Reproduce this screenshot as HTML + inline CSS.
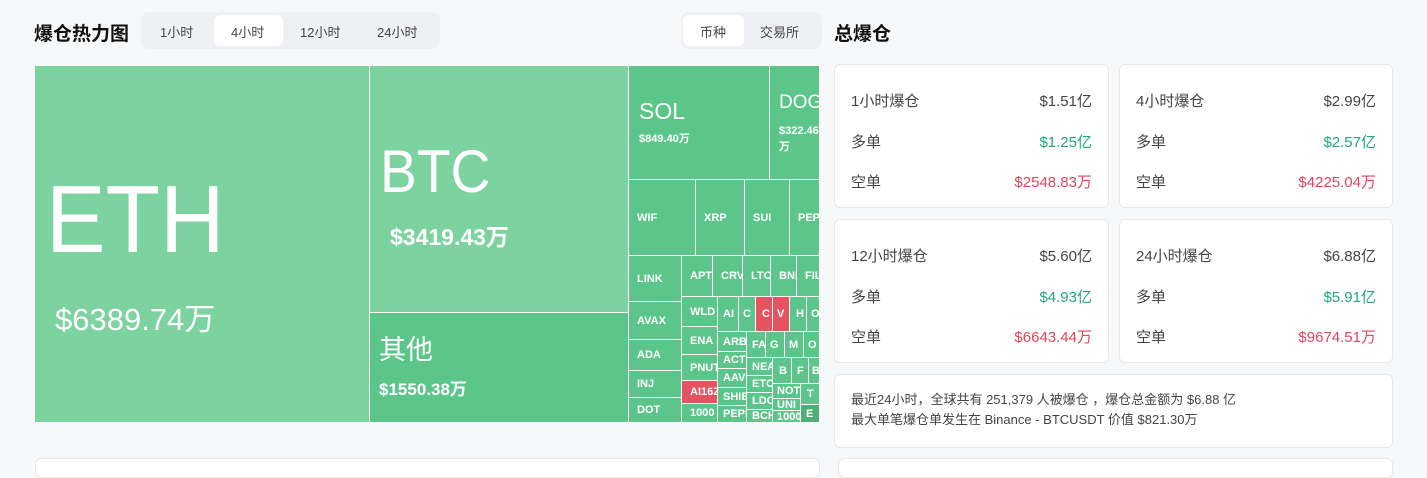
<!DOCTYPE html>
<html><head><meta charset="utf-8"><style>
*{margin:0;padding:0;box-sizing:border-box}
body{width:1427px;height:461px;background:#f7f8f9;font-family:"Liberation Sans","Noto Sans CJK SC",sans-serif;position:relative;overflow:hidden;color:#222}
.a{position:absolute}
.tm{position:absolute;left:35px;top:66px;width:785px;height:357px;background:#fff;overflow:hidden}
.c{position:absolute;background:#5cc68a;color:#fff;overflow:hidden;white-space:nowrap;font-weight:bold;font-size:11px;padding-left:8px;display:flex;align-items:center;border-right:1px solid #fff;border-bottom:1px solid #fff}
.r{background:#e4535f}
.card{position:absolute;background:#fff;border:1px solid #e6e8ea;border-radius:6px}
.row{position:absolute;left:16px;right:16px;display:flex;justify-content:space-between;font-size:15px;color:#444}
.g{color:#20a87a}.rd{color:#e0455a}
</style></head><body>
<div class="a" style="left:34px;top:19px;font-size:19px;font-weight:bold;color:#111">爆仓热力图</div>
<div class="a" style="left:141px;top:12px;width:299px;height:37px;background:#eef0f3;border-radius:8px"></div>
<div class="a" style="left:214px;top:15px;width:69px;height:31px;background:#fff;border-radius:6px"></div>
<div class="a" style="left:160px;top:22px;font-size:13px;color:#444">1小时</div>
<div class="a" style="left:231px;top:22px;font-size:13px;color:#444">4小时</div>
<div class="a" style="left:300px;top:22px;font-size:13px;color:#444">12小时</div>
<div class="a" style="left:377px;top:22px;font-size:13px;color:#444">24小时</div>
<div class="a" style="left:681px;top:12px;width:141px;height:37px;background:#eef0f3;border-radius:8px"></div>
<div class="a" style="left:683px;top:15px;width:61px;height:31px;background:#fff;border-radius:6px"></div>
<div class="a" style="left:700px;top:22px;font-size:13px;color:#444">币种</div>
<div class="a" style="left:760px;top:22px;font-size:13px;color:#444">交易所</div>
<div class="a" style="left:834px;top:19px;font-size:19px;font-weight:bold;color:#111">总爆仓</div>

<div class="tm">
<div class="c" style="left:0;top:0;width:335px;height:357px;background:#7dd3a0;display:block;padding:0;font-weight:normal">
 <div class="a" style="left:11px;top:106px;font-size:96px;line-height:1;transform:scaleX(.93);transform-origin:left">ETH</div>
 <div class="a" style="left:20px;top:238px;font-size:31px;line-height:1">$6389.74万</div></div>
<div class="c" style="left:335px;top:0;width:259px;height:247px;background:#7dd3a0;display:block;padding:0;font-weight:normal">
 <div class="a" style="left:10px;top:76px;font-size:60px;line-height:1;transform:scaleX(.92);transform-origin:left">BTC</div>
 <div class="a" style="left:20px;top:160px;font-size:23px;line-height:1;font-weight:bold">$3419.43万</div></div>
<div class="c" style="left:335px;top:247px;width:259px;height:110px;display:block;padding:0">
 <div class="a" style="left:9px;top:24px;font-size:27px;line-height:1;font-weight:normal">其他</div>
 <div class="a" style="left:9px;top:68px;font-size:17px;line-height:1">$1550.38万</div></div>
<div class="c" style="left:594px;top:0;width:141px;height:114px;display:block;padding:0">
 <div class="a" style="left:10px;top:34px;font-size:23px;line-height:1;font-weight:normal">SOL</div>
 <div class="a" style="left:10px;top:68px;font-size:11px;line-height:1">$849.40万</div></div>
<div class="c" style="left:735px;top:0;width:50px;height:114px;display:block;padding:0">
 <div class="a" style="left:9px;top:27px;font-size:19px;line-height:1;font-weight:normal">DOGE</div>
 <div class="a" style="left:9px;top:57px;font-size:11px;line-height:16px">$322.46<br>万</div></div>
<div class="c" style="left:594px;top:114px;width:67px;height:76px">WIF</div>
<div class="c" style="left:661px;top:114px;width:49px;height:76px">XRP</div>
<div class="c" style="left:710px;top:114px;width:45px;height:76px">SUI</div>
<div class="c" style="left:755px;top:114px;width:30px;height:76px">PEPE</div>
<div class="c" style="left:594px;top:190px;width:53px;height:46px">LINK</div>
<div class="c" style="left:594px;top:236px;width:53px;height:38px">AVAX</div>
<div class="c" style="left:594px;top:274px;width:53px;height:31px">ADA</div>
<div class="c" style="left:594px;top:305px;width:53px;height:27px">INJ</div>
<div class="c" style="left:594px;top:332px;width:53px;height:25px">DOT</div>
<div class="c" style="left:647px;top:190px;width:31px;height:41px">APT</div>
<div class="c" style="left:678px;top:190px;width:30px;height:41px">CRV</div>
<div class="c" style="left:708px;top:190px;width:28px;height:41px">LTC</div>
<div class="c" style="left:736px;top:190px;width:26px;height:41px">BNB</div>
<div class="c" style="left:762px;top:190px;width:23px;height:41px">FIL</div>
<div class="c" style="left:647px;top:231px;width:36px;height:30px">WLD</div>
<div class="c" style="left:647px;top:261px;width:36px;height:28px">ENA</div>
<div class="c" style="left:647px;top:289px;width:36px;height:26px">PNUT</div>
<div class="c r" style="left:647px;top:315px;width:36px;height:23px">AI16Z</div>
<div class="c" style="left:647px;top:338px;width:36px;height:19px">1000</div>
<div class="c" style="left:683px;top:231px;width:21px;height:35px;padding-left:5px">AI</div>
<div class="c" style="left:704px;top:231px;width:17px;height:35px;padding-left:4px">C</div>
<div class="c r" style="left:721px;top:231px;width:17px;height:35px;padding-left:6px">C</div>
<div class="c r" style="left:738px;top:231px;width:17px;height:35px;padding-left:4px">V</div>
<div class="c" style="left:755px;top:231px;width:17px;height:35px;padding-left:6px">H</div>
<div class="c" style="left:772px;top:231px;width:13px;height:35px;padding-left:4px">O</div>
<div class="c" style="left:683px;top:266px;width:29px;height:20px;padding-left:5px">ARB</div>
<div class="c" style="left:683px;top:286px;width:29px;height:17px;padding-left:5px">ACT</div>
<div class="c" style="left:683px;top:303px;width:29px;height:19px;padding-left:5px">AAVE</div>
<div class="c" style="left:683px;top:322px;width:29px;height:18px;padding-left:5px">SHIB</div>
<div class="c" style="left:683px;top:340px;width:29px;height:17px;padding-left:5px">PEPE</div>
<div class="c" style="left:712px;top:266px;width:19px;height:26px;padding-left:5px">FA</div>
<div class="c" style="left:731px;top:266px;width:19px;height:26px;padding-left:4px">G</div>
<div class="c" style="left:750px;top:266px;width:19px;height:26px;padding-left:4px">M</div>
<div class="c" style="left:769px;top:266px;width:16px;height:26px;padding-left:4px">O</div>
<div class="c" style="left:712px;top:292px;width:26px;height:18px;padding-left:5px">NEAR</div>
<div class="c" style="left:712px;top:310px;width:26px;height:17px;padding-left:5px">ETC</div>
<div class="c" style="left:712px;top:327px;width:26px;height:17px;padding-left:5px">LDO</div>
<div class="c" style="left:712px;top:344px;width:26px;height:13px;padding-left:5px">BCH</div>
<div class="c" style="left:738px;top:292px;width:19px;height:26px;padding-left:6px">B</div>
<div class="c" style="left:757px;top:292px;width:17px;height:26px;padding-left:5px">F</div>
<div class="c" style="left:774px;top:292px;width:11px;height:26px;padding-left:3px">B</div>
<div class="c" style="left:738px;top:318px;width:28px;height:15px;padding-left:4px">NOT</div>
<div class="c" style="left:738px;top:333px;width:28px;height:12px;padding-left:4px">UNI</div>
<div class="c" style="left:738px;top:345px;width:28px;height:12px;padding-left:4px">1000</div>
<div class="c" style="left:766px;top:318px;width:19px;height:21px;padding-left:6px">T</div>
<div class="c" style="left:766px;top:339px;width:19px;height:18px;padding-left:5px;background:#4fae78">E</div>
</div>

<div class="card" style="left:834px;top:64px;width:275px;height:144px">
<div class="row" style="top:25px"><span>1小时爆仓</span><span>$1.51亿</span></div>
<div class="row" style="top:66px"><span>多单</span><span class="g">$1.25亿</span></div>
<div class="row" style="top:106px"><span>空单</span><span class="rd">$2548.83万</span></div></div>
<div class="card" style="left:1119px;top:64px;width:274px;height:144px">
<div class="row" style="top:25px"><span>4小时爆仓</span><span>$2.99亿</span></div>
<div class="row" style="top:66px"><span>多单</span><span class="g">$2.57亿</span></div>
<div class="row" style="top:106px"><span>空单</span><span class="rd">$4225.04万</span></div></div>
<div class="card" style="left:834px;top:219px;width:275px;height:144px">
<div class="row" style="top:25px"><span>12小时爆仓</span><span>$5.60亿</span></div>
<div class="row" style="top:66px"><span>多单</span><span class="g">$4.93亿</span></div>
<div class="row" style="top:106px"><span>空单</span><span class="rd">$6643.44万</span></div></div>
<div class="card" style="left:1119px;top:219px;width:274px;height:144px">
<div class="row" style="top:25px"><span>24小时爆仓</span><span>$6.88亿</span></div>
<div class="row" style="top:66px"><span>多单</span><span class="g">$5.91亿</span></div>
<div class="row" style="top:106px"><span>空单</span><span class="rd">$9674.51万</span></div></div>
<div class="card" style="left:834px;top:374px;width:559px;height:74px;font-size:13px;color:#444;line-height:20px;padding:15px 0 0 16px">
最近24小时，全球共有 251,379 人被爆仓 ，爆仓总金额为 $6.88 亿<br>最大单笔爆仓单发生在 Binance - BTCUSDT 价值 $821.30万</div>
<div class="card" style="left:35px;top:458px;width:785px;height:20px"></div>
<div class="card" style="left:838px;top:458px;width:555px;height:20px"></div>
</body></html>
